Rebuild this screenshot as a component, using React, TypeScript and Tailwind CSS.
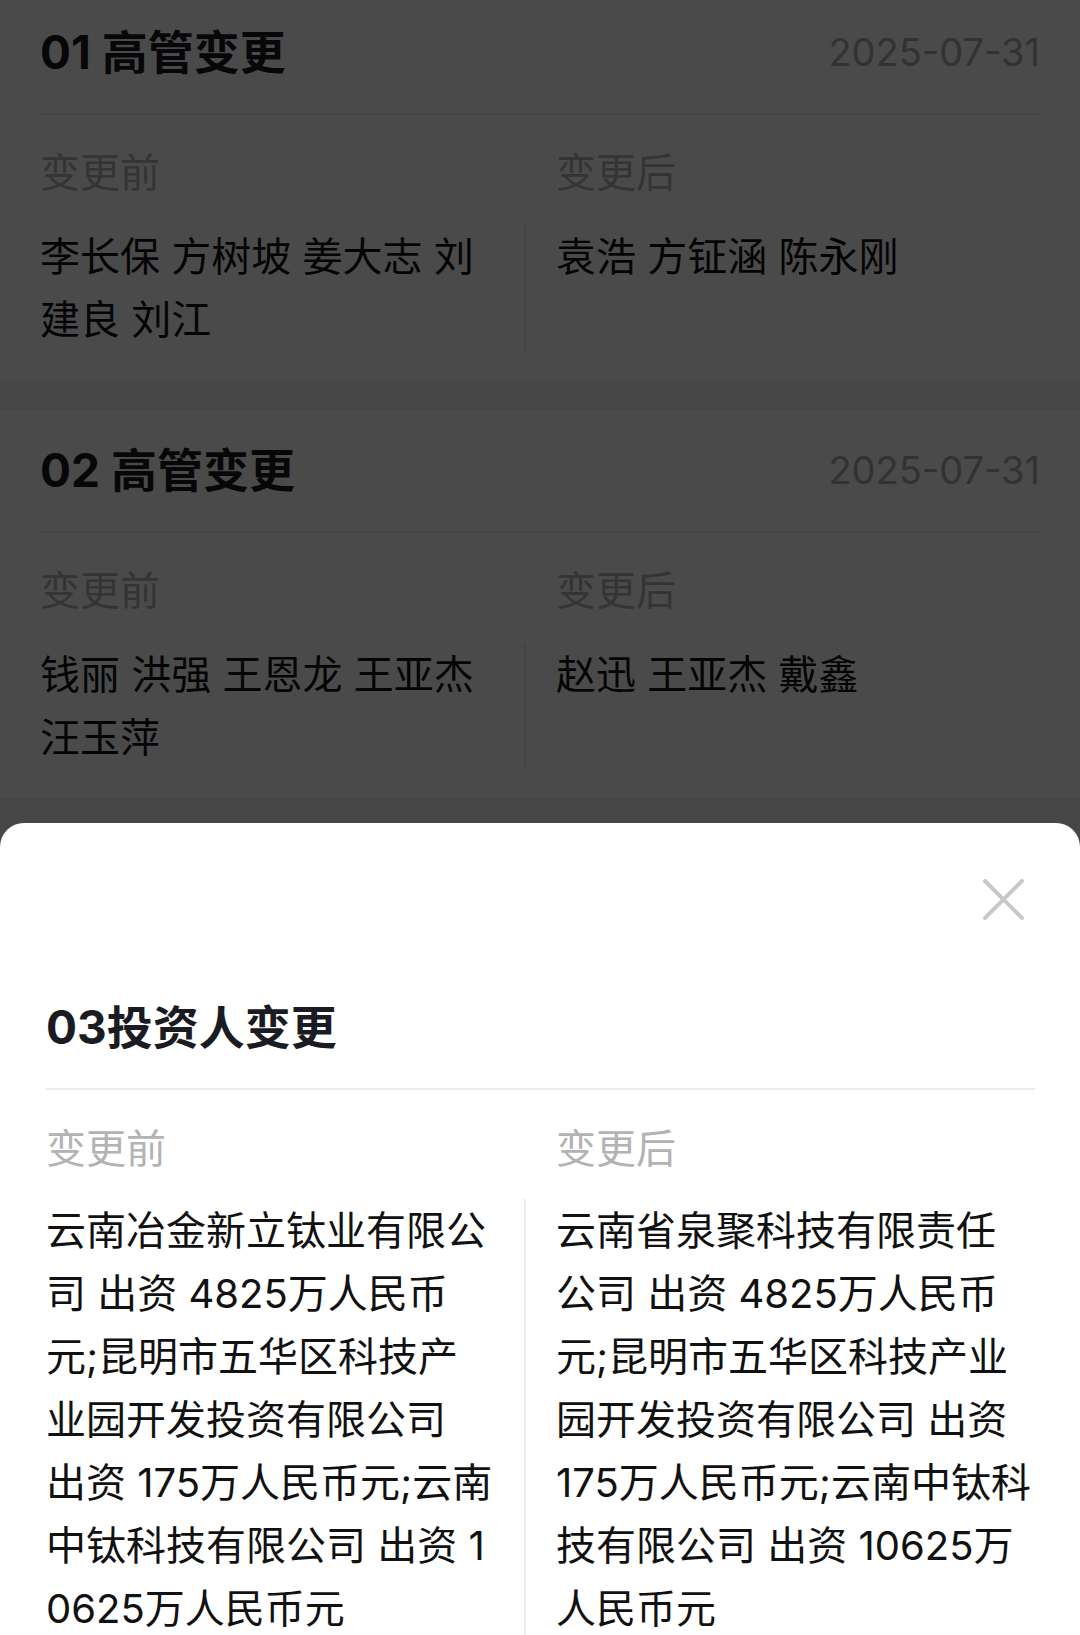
import { Fragment } from 'react';

type Change = {
  no: string;
  title: string;
  date: string;
  before: string;
  after: string;
};

const changes: Change[] = [
  {
    no: '01',
    title: '高管变更',
    date: '2025-07-31',
    before: '李长保 方树坡 姜大志 刘建良 刘江',
    after: '袁浩 方钲涵 陈永刚',
  },
  {
    no: '02',
    title: '高管变更',
    date: '2025-07-31',
    before: '钱丽 洪强 王恩龙 王亚杰 汪玉萍',
    after: '赵迅 王亚杰 戴鑫',
  },
];

// lines as they wrap in the sheet
const investorBefore = [
  '云南冶金新立钛业有限公',
  '司 出资 4825万人民币',
  '元;昆明市五华区科技产',
  '业园开发投资有限公司',
  '出资 175万人民币元;云南',
  '中钛科技有限公司 出资 1',
  '0625万人民币元',
];

const investorAfter = [
  '云南省泉聚科技有限责任',
  '公司 出资 4825万人民币',
  '元;昆明市五华区科技产业',
  '园开发投资有限公司 出资',
  '175万人民币元;云南中钛科',
  '技有限公司 出资 10625万',
  '人民币元',
];

const font = "font-['Inter','Noto_Sans_CJK_SC',sans-serif]";

function ChangeCard({ item }: { item: Change }) {
  return (
    <section className="bg-white px-[40px] pt-[37px] pb-[29px]">
      <div className="flex h-[46px] items-center justify-between">
        <h3 className="text-[46px] leading-[46px] font-bold text-[#1b1b23]">
          {item.no}&nbsp;{item.title}
        </h3>
        <span className="text-[38px] leading-[46px] text-[#adadad]">{item.date}</span>
      </div>
      <div className="mt-[38px] h-[2px] bg-[#ebebeb]" />
      <div className="mt-[38px] flex text-[40px] leading-[40px] text-[#b3b3b3]">
        <div className="w-[484px]">变更前</div>
        <div className="flex-1 pl-[32px]">变更后</div>
      </div>
      <div className="mt-[32px] flex text-[40px] leading-[63px] text-[#111]">
        <div className="w-[484px] pr-[30px]">{item.before}</div>
        <div className="flex-1 border-l-2 border-[#ebebeb] pl-[30px]">{item.after}</div>
      </div>
    </section>
  );
}

function Lines({ lines }: { lines: string[] }) {
  return (
    <>
      {lines.map((line, i) => (
        <Fragment key={i}>
          <div className="whitespace-nowrap">{line}</div>
        </Fragment>
      ))}
    </>
  );
}

export default function App() {
  return (
    <div className={`relative h-[1635px] w-[1080px] overflow-hidden bg-[#f5f5f5] ${font}`}>
      <div className="-mt-2 flex flex-col gap-[30px]">
        {changes.map((c) => (
          <ChangeCard key={c.no} item={c} />
        ))}
      </div>

      {/* dimmed backdrop */}
      <div className="absolute inset-0 bg-black/[0.71]" />

      {/* bottom sheet */}
      <div className="absolute inset-x-0 top-[823px] bottom-0 overflow-hidden rounded-t-[24px] bg-white">
        <div className="flex justify-end pt-[56px] pr-[56px]">
          <button className="h-[41px] w-[41px]" aria-label="关闭">
            <svg width="41" height="41" viewBox="0 0 41 41" fill="none">
              <path
                d="M2 2L39 39M39 2L2 39"
                stroke="#c8c8c8"
                strokeWidth="4"
                strokeLinecap="round"
              />
            </svg>
          </button>
        </div>
        <h2 className="mt-[84px] pl-[46px] text-[46px] leading-[46px] font-bold text-[#1b1b23]">
          03投资人变更
        </h2>
        <div className="mt-[38px] ml-[46px] mr-[45px] h-[2px] bg-[#ebebeb]" />
        <div className="mt-[39px] flex pl-[46px] text-[40px] leading-[40px] text-[#b3b3b3]">
          <div className="w-[478px]">变更前</div>
          <div className="flex-1 pl-[32px]">变更后</div>
        </div>
        <div className="mt-[30px] flex pl-[46px] text-[40px] leading-[63px] text-[#111]">
          <div className="w-[478px]">
            <Lines lines={investorBefore} />
          </div>
          <div className="flex-1 border-l-2 border-[#ebebeb] pl-[30px]">
            <Lines lines={investorAfter} />
          </div>
        </div>
      </div>
    </div>
  );
}
